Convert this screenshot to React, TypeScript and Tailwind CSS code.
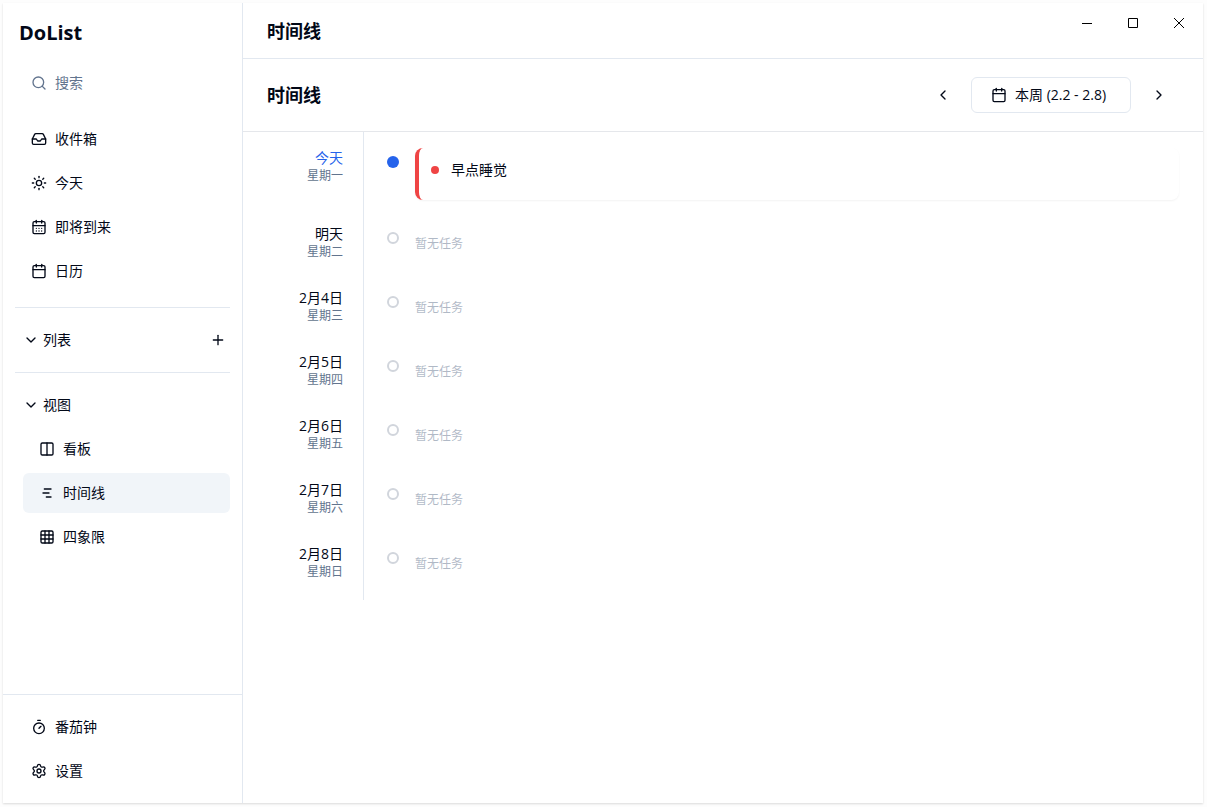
import React from 'react'
import {
  Calendar,
  CalendarDays,
  ChevronDown,
  ChevronLeft,
  ChevronRight,
  Columns2,
  Grid3x3,
  Inbox,
  Plus,
  Search,
  Settings,
  Sun,
  Timer,
  type LucideIcon
} from 'lucide-react'

interface NavItem {
  label: string
  icon: LucideIcon | React.FC<{ className?: string }>
  active?: boolean
}

interface Day {
  label: string
  weekday: string
  today?: boolean
  tasks: string[]
}

const TimelineIcon: React.FC<{ className?: string }> = ({ className }) => (
  <svg
    className={className}
    viewBox="0 0 24 24"
    fill="none"
    stroke="currentColor"
    strokeWidth="2"
    strokeLinecap="round"
    strokeLinejoin="round"
  >
    <path d="M8 6h10" />
    <path d="M6 12h9" />
    <path d="M11 18h7" />
  </svg>
)

const mainItems: NavItem[] = [
  { label: '收件箱', icon: Inbox },
  { label: '今天', icon: Sun },
  { label: '即将到来', icon: CalendarDays },
  { label: '日历', icon: Calendar }
]

const viewItems: NavItem[] = [
  { label: '看板', icon: Columns2 },
  { label: '时间线', icon: TimelineIcon, active: true },
  { label: '四象限', icon: Grid3x3 }
]

const footerItems: NavItem[] = [
  { label: '番茄钟', icon: Timer },
  { label: '设置', icon: Settings }
]

const days: Day[] = [
  { label: '今天', weekday: '星期一', today: true, tasks: ['早点睡觉'] },
  { label: '明天', weekday: '星期二', tasks: [] },
  { label: '2月4日', weekday: '星期三', tasks: [] },
  { label: '2月5日', weekday: '星期四', tasks: [] },
  { label: '2月6日', weekday: '星期五', tasks: [] },
  { label: '2月7日', weekday: '星期六', tasks: [] },
  { label: '2月8日', weekday: '星期日', tasks: [] }
]

const NavList: React.FC<{ items: NavItem[] }> = ({ items }) => (
  <div className="flex flex-col gap-1">
    {items.map(({ label, icon: Icon, active }) => (
      <button
        key={label}
        className={`flex h-10 w-full items-center gap-2 rounded-md px-4 text-left text-sm hover:bg-slate-100 ${
          active ? 'bg-slate-100' : ''
        }`}
      >
        <Icon className="size-4 shrink-0" />
        {label}
      </button>
    ))}
  </div>
)

const SectionToggle: React.FC<{ label: string }> = ({ label }) => (
  <button className="flex h-8 flex-1 items-center gap-1 text-left text-sm">
    <ChevronDown className="size-4" />
    {label}
  </button>
)

const Sidebar: React.FC = () => (
  <aside className="flex w-60 shrink-0 flex-col border-r border-slate-200">
    <h1 className="p-4 text-xl font-bold">DoList</h1>
    <nav className="flex-1 px-3">
      <button className="flex h-10 w-full items-center gap-2 px-4 text-left text-sm text-slate-500">
        <Search className="size-4" />
        搜索
      </button>
      <div className="mt-4">
        <NavList items={mainItems} />
      </div>
      <hr className="my-4 border-slate-200" />
      <div className="flex items-center pl-2">
        <SectionToggle label="列表" />
        <button aria-label="新建列表" className="flex size-6 items-center justify-center">
          <Plus className="size-4" />
        </button>
      </div>
      <hr className="my-4 border-slate-200" />
      <div className="pl-2">
        <div className="mb-2 flex">
          <SectionToggle label="视图" />
        </div>
        <NavList items={viewItems} />
      </div>
    </nav>
    <div className="border-t border-slate-200 p-3">
      <NavList items={footerItems} />
    </div>
  </aside>
)

const WindowControls: React.FC = () => (
  <div className="flex h-10 pr-px text-black">
    <button aria-label="最小化" className="flex w-[46px] items-center justify-center">
      <svg className="size-2.5" viewBox="0 0 10 10" fill="none" stroke="currentColor">
        <path d="M0 5.5h10" />
      </svg>
    </button>
    <button aria-label="最大化" className="flex w-[46px] items-center justify-center">
      <svg className="size-2.5" viewBox="0 0 10 10" fill="none" stroke="currentColor">
        <path d="M.5 .5h9v9h-9z" />
      </svg>
    </button>
    <button aria-label="关闭" className="flex w-[46px] items-center justify-center">
      <svg className="size-2.5" viewBox="0 0 10 10" fill="none" stroke="currentColor">
        <path d="M0 0l10 10M10 0L0 10" />
      </svg>
    </button>
  </div>
)

const DayRow: React.FC<{ day: Day }> = ({ day }) => (
  <li className="group flex">
    <div className="w-[120px] shrink-0 pt-4 pr-5 pb-2 text-right">
      <div className={`text-sm ${day.today ? 'text-[#2563eb]' : ''}`}>{day.label}</div>
      <div className="text-xs text-slate-500">{day.weekday}</div>
    </div>
    <div className="flex flex-1 gap-4 border-l border-slate-200 pt-4 pr-6 pb-2 pl-[23px] group-last:pb-4">
      <span
        className={`mt-2 size-3 shrink-0 rounded-full ${
          day.today ? 'bg-[#2563eb]' : 'border-2 border-gray-300'
        }`}
      />
      {day.tasks.length > 0 ? (
        day.tasks.map((task) => (
          <div
            key={task}
            className="flex flex-1 gap-3 rounded-lg border-l-4 border-[#ef4444] px-3 pt-3 pb-5 shadow-[0_1px_2px_rgba(0,0,0,0.05)]"
          >
            <span className="mt-1.5 size-2 rounded-full bg-[#ef4444]" />
            <span className="text-sm">{task}</span>
          </div>
        ))
      ) : (
        <p className="flex h-10 items-center text-xs text-slate-500/50">暂无任务</p>
      )}
    </div>
  </li>
)

export default function App() {
  return (
    <div className="h-screen bg-[#fdfdfd] p-[3px] pr-1 pb-1 font-['Open_Sans','Noto_Sans_CJK_SC',sans-serif] text-[#020817]">
      <div className="flex h-full bg-white shadow-[0_1px_2px_rgba(0,0,0,0.14)]">
        <Sidebar />
        <main className="flex min-w-0 flex-1 flex-col">
          <header className="flex h-14 justify-between border-b border-slate-200 pl-6">
            <h2 className="self-center text-lg font-semibold">时间线</h2>
            <WindowControls />
          </header>
          <div className="flex items-center justify-between border-b border-gray-200 px-6 py-4">
            <h2 className="text-lg font-semibold">时间线</h2>
            <div className="flex items-center gap-2">
              <button aria-label="上一周" className="flex size-10 items-center justify-center">
                <ChevronLeft className="size-4" />
              </button>
              <button className="flex h-9 min-w-40 items-center gap-2 rounded-md border border-slate-200 px-[19px] text-sm">
                <Calendar className="size-4" />
                本周 (2.2 - 2.8)
              </button>
              <button aria-label="下一周" className="flex size-10 items-center justify-center">
                <ChevronRight className="size-4" />
              </button>
            </div>
          </div>
          <ul className="flex-1 overflow-auto">
            {days.map((day) => (
              <DayRow key={day.label} day={day} />
            ))}
          </ul>
        </main>
      </div>
    </div>
  )
}
